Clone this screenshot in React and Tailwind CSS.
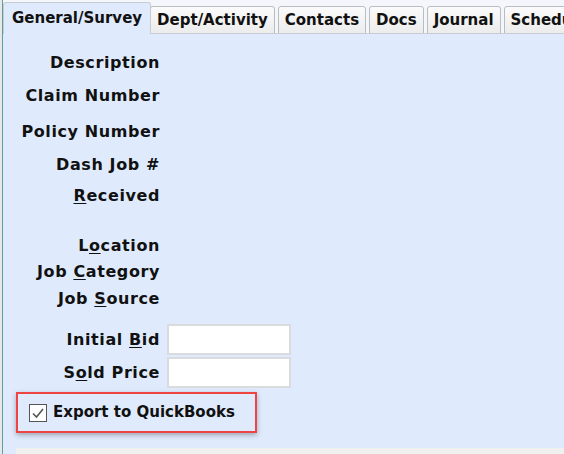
import React from "react";

const font = { fontFamily: '"DejaVu Sans", Verdana, Tahoma, sans-serif' };

function U({ children }) {
  return <span className="underline underline-offset-2 decoration-1">{children}</span>;
}

function Tab({ children, active }) {
  if (active) {
    return (
      <div className="h-[32px] pl-[8px] pr-[8px] flex items-center rounded-t-[3px] border border-b-0 border-[#c8ccd2] bg-[#dfebfd] text-[15px] font-bold text-[#111] -mr-px z-10">
        {children}
      </div>
    );
  }
  return (
    <div className="h-[28px] px-[6px] flex items-center rounded-t-[3px] border border-[#b9bcc0] bg-gradient-to-b from-[#fbfbfb] to-[#ececec] text-[15px] font-bold text-[#111] mr-[3px]">
      {children}
    </div>
  );
}

function Label({ children, h = 24, mt = 0, right }) {
  return (
    <div className="flex items-center" style={{ height: h, marginTop: mt }}>
      <div className="w-[157px] text-right text-[16px] font-bold text-[#111] whitespace-nowrap tracking-[0.6px]">{children}</div>
      {right}
    </div>
  );
}

function Input() {
  return <div className="ml-[7px] w-[124px] h-[31px] bg-white border-2 border-[#d9dbde]" />;
}

export default function App() {
  return (
    <div className="w-[564px] h-[454px] overflow-hidden bg-[#f3f6fa] flex" style={font}>
      <div className="w-[2px] bg-[#e6e8ea]" />
      <div className="w-px bg-[#5f9f98]" />
      <div className="flex-1 flex flex-col min-w-0">
        <div className="h-[34px] flex items-end whitespace-nowrap bg-[#f3f6fa] -mb-px">
          <Tab active>General/Survey</Tab>
          <Tab>Dept/Activity</Tab>
          <Tab>Contacts</Tab>
          <Tab>Docs</Tab>
          <Tab>Journal</Tab>
          <Tab>Schedule</Tab>
        </div>
        <div className="flex-1 bg-[#dfebfd] border-t border-[#c8ccd2] flex flex-col relative">
          <Label mt={17}>Description</Label>
          <Label mt={9}>Claim Number</Label>
          <Label mt={12}>Policy Number</Label>
          <Label mt={9}>Dash Job #</Label>
          <Label mt={7}><U>R</U>eceived</Label>
          <Label mt={26}>L<U>o</U>cation</Label>
          <Label mt={2}>Job <U>C</U>ategory</Label>
          <Label mt={3}>Job <U>S</U>ource</Label>
          <Label h={31} mt={13} right={<Input />}>Initial <U>B</U>id</Label>
          <Label h={31} mt={2} right={<Input />}>S<U>o</U>ld Price</Label>
          <div className="ml-[13px] mt-[4px] w-[241px] h-[41px] border-2 border-[#ef4444] shadow-[0_2px_5px_rgba(0,0,0,0.3)] flex items-center pl-[11px]">
            <div className="w-[18px] h-[18px] border border-[#555] bg-white flex items-center justify-center">
              <svg width="14" height="14" viewBox="0 0 14 14">
                <path d="M2 7.5 L5.5 11 L12 3" fill="none" stroke="#555" strokeWidth="1.6" />
              </svg>
            </div>
            <span className="ml-[6px] text-[15px] font-bold text-[#111] whitespace-nowrap">Export to QuickBooks</span>
          </div>
          <div className="flex-1" />
          <div className="ml-[13px] h-[6px] bg-[#f0f0f0]" />
        </div>
      </div>
    </div>
  );
}
